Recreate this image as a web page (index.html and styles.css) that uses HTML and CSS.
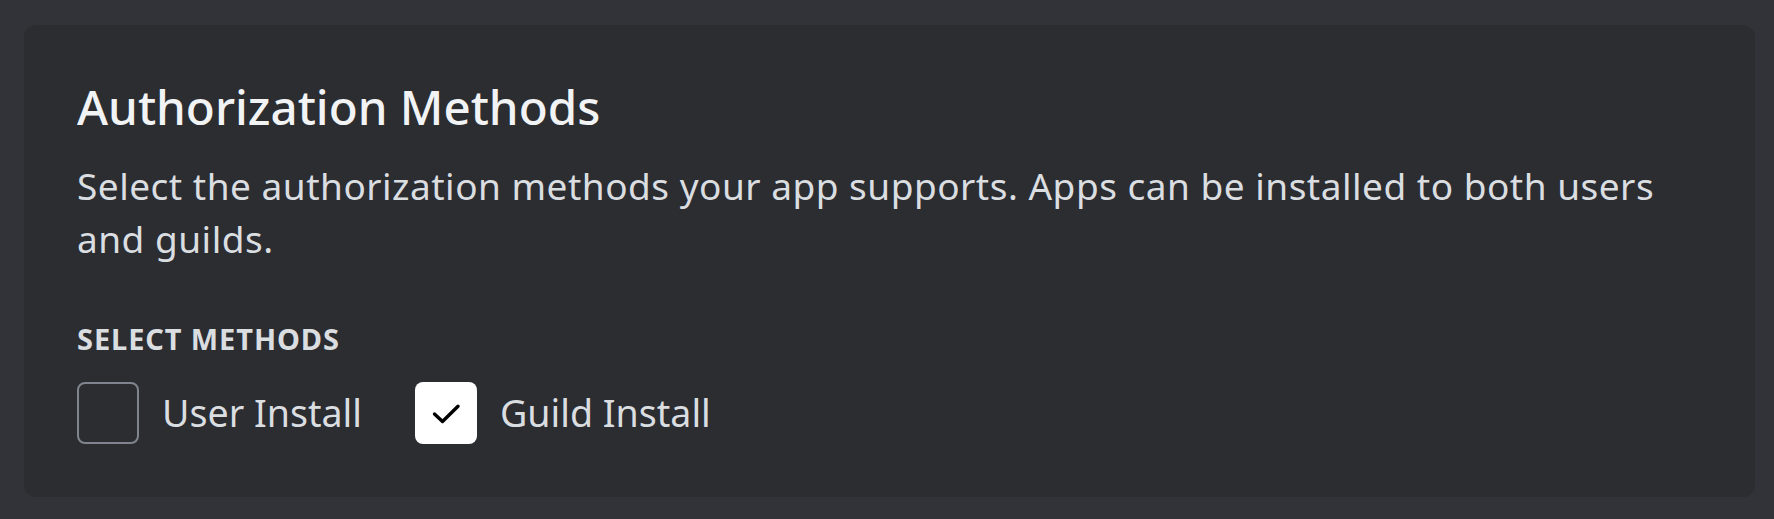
FILE: index.html
```html
<!DOCTYPE html>
<html>
<head>
<meta charset="utf-8">
<link rel="stylesheet" href="styles.css">
</head>
<body>
<div class="page">
  <section class="card">
    <h2 class="title">Authorization Methods</h2>
    <p class="desc">Select the authorization methods your app supports. Apps can be installed to both users and guilds.</p>
    <div class="label">SELECT METHODS</div>
    <div class="options">
      <label class="option">
        <span class="box"></span>
        <span class="opt-text">User Install</span>
      </label>
      <label class="option">
        <span class="box checked">
          <svg class="check" width="62" height="62" viewBox="0 0 62 62"><path d="M19.5 32 L27.5 39.5 L43 24.3" fill="none" stroke="#000" stroke-width="3.4" stroke-linecap="round" stroke-linejoin="round"/></svg>
        </span>
        <span class="opt-text">Guild Install</span>
      </label>
    </div>
  </section>
</div>
</body>
</html>
```
FILE: styles.css
```css
html, body {
  margin: 0;
  padding: 0;
  background: #313338;
}
.page {
  padding: 25px 19px 22px 24px;
  height: 519px;
  box-sizing: border-box;
}
.card {
  background: #2b2d31;
  border-radius: 12px;
  height: 472px;
  box-sizing: border-box;
  padding: 52px 53px 0 53px;
  font-family: "Noto Sans", "Open Sans", sans-serif;
}
.title {
  margin: 0;
  font-size: 47.5px;
  line-height: 60px;
  font-weight: 500;
  color: #f2f3f5;
}
.desc {
  margin: 22px 0 0 0;
  max-width: 1600px;
  font-size: 37px;
  line-height: 53px;
  letter-spacing: 0.5px;
  color: #dbdee1;
}
.label {
  margin-top: 56px;
  font-size: 29px;
  line-height: 36px;
  font-weight: 700;
  letter-spacing: 0.9px;
  color: #dbdee1;
}
.options {
  margin-top: 25px;
  display: flex;
  gap: 53px;
  align-items: center;
}
.option {
  display: flex;
  align-items: center;
  gap: 23px;
}
.box {
  width: 62px;
  height: 62px;
  box-sizing: border-box;
  border: 2px solid #80848e;
  border-radius: 8px;
  display: flex;
  align-items: center;
  justify-content: center;
}
.box.checked {
  background: #ffffff;
  border: 0;
}
.check {
  display: block;
}
.opt-text {
  font-size: 37.6px;
  line-height: 50px;
  color: #dbdee1;
}
```
